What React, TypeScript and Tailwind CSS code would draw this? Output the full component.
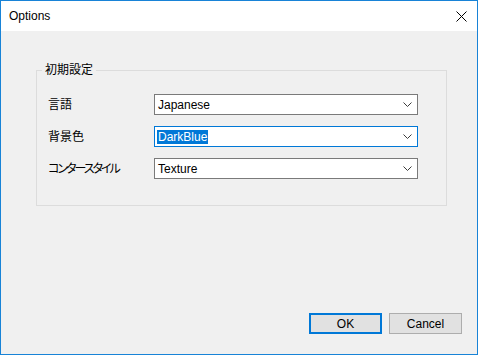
import { ReactNode } from 'react';

const ui = "font-['Liberation_Sans','Noto_Sans_CJK_JP',sans-serif]";

const Chevron = () => (
  <svg width="9" height="5" viewBox="0 0 9 5" className="shrink-0">
    <path d="M0.5 0.5 L4.5 4.5 L8.5 0.5" fill="none" stroke="#3c3c3c" strokeWidth="1" />
  </svg>
);

const Combo = ({ children, focused = false }: { children: ReactNode; focused?: boolean }) => (
  <div
    className={`flex h-[21px] w-[264px] items-center justify-between bg-white pl-[2px] pr-[5px] border ${
      focused ? 'border-[#0078d7]' : 'border-[#7a7a7a]'
    }`}
  >
    <div className="text-[12px] leading-[14px] text-black">{children}</div>
    <Chevron />
  </div>
);

const rows = [
  { label: '言語', value: 'Japanese', tight: '' },
  { label: '背景色', value: 'DarkBlue', focused: true, tight: '' },
  // katakana is much narrower in the original UI font
  { label: 'コンタースタイル', value: 'Texture', tight: 'tracking-[-2px]' },
];

export default function App() {
  return (
    <div className={`${ui} flex h-[355px] w-[478px] flex-col border border-[#1883d7] bg-[#f0f0f0] text-black`}>
      {/* Title bar */}
      <div className="flex h-[30px] items-center justify-between bg-white pl-[8px] pr-[10px]">
        <span className="text-[12px]">Options</span>
        <svg width="11" height="11" viewBox="0 0 11 11">
          <path d="M0.5 0.5 L10.5 10.5 M10.5 0.5 L0.5 10.5" stroke="#000" strokeWidth="1" />
        </svg>
      </div>

      <div className="flex flex-1 flex-col pl-[35px] pr-[15px]">
        {/* Group box */}
        <div className="relative mt-[39px] h-[136px] w-[411px] border border-[#dcdcdc]">
          <span className="absolute -top-[9px] left-[5px] bg-[#f0f0f0] px-[3px] text-[12px] leading-[16px] [font-feature-settings:'palt']">
            初期設定
          </span>
          <div className="flex flex-col gap-[11px] pl-[11px] pt-[23px]">
            {rows.map((r) => (
              <div key={r.label} className="flex h-[21px] items-center">
                <span className={`w-[106px] text-[12px] [font-feature-settings:'palt'] ${r.tight}`}>{r.label}</span>
                <Combo focused={r.focused}>
                  {r.focused ? (
                    <span className="bg-[#0078d7] px-[1px] text-white">{r.value}</span>
                  ) : (
                    <span className="px-[1px]">{r.value}</span>
                  )}
                </Combo>
              </div>
            ))}
          </div>
        </div>

        {/* Buttons */}
        <div className="mt-auto mb-[20px] flex justify-end gap-[7px]">
          <button className="h-[21px] w-[73px] border-2 border-[#0078d7] bg-[#e1e1e1] text-[12px]">OK</button>
          <button className="h-[21px] w-[73px] border border-[#adadad] bg-[#e1e1e1] text-[12px]">Cancel</button>
        </div>
      </div>
    </div>
  );
}
